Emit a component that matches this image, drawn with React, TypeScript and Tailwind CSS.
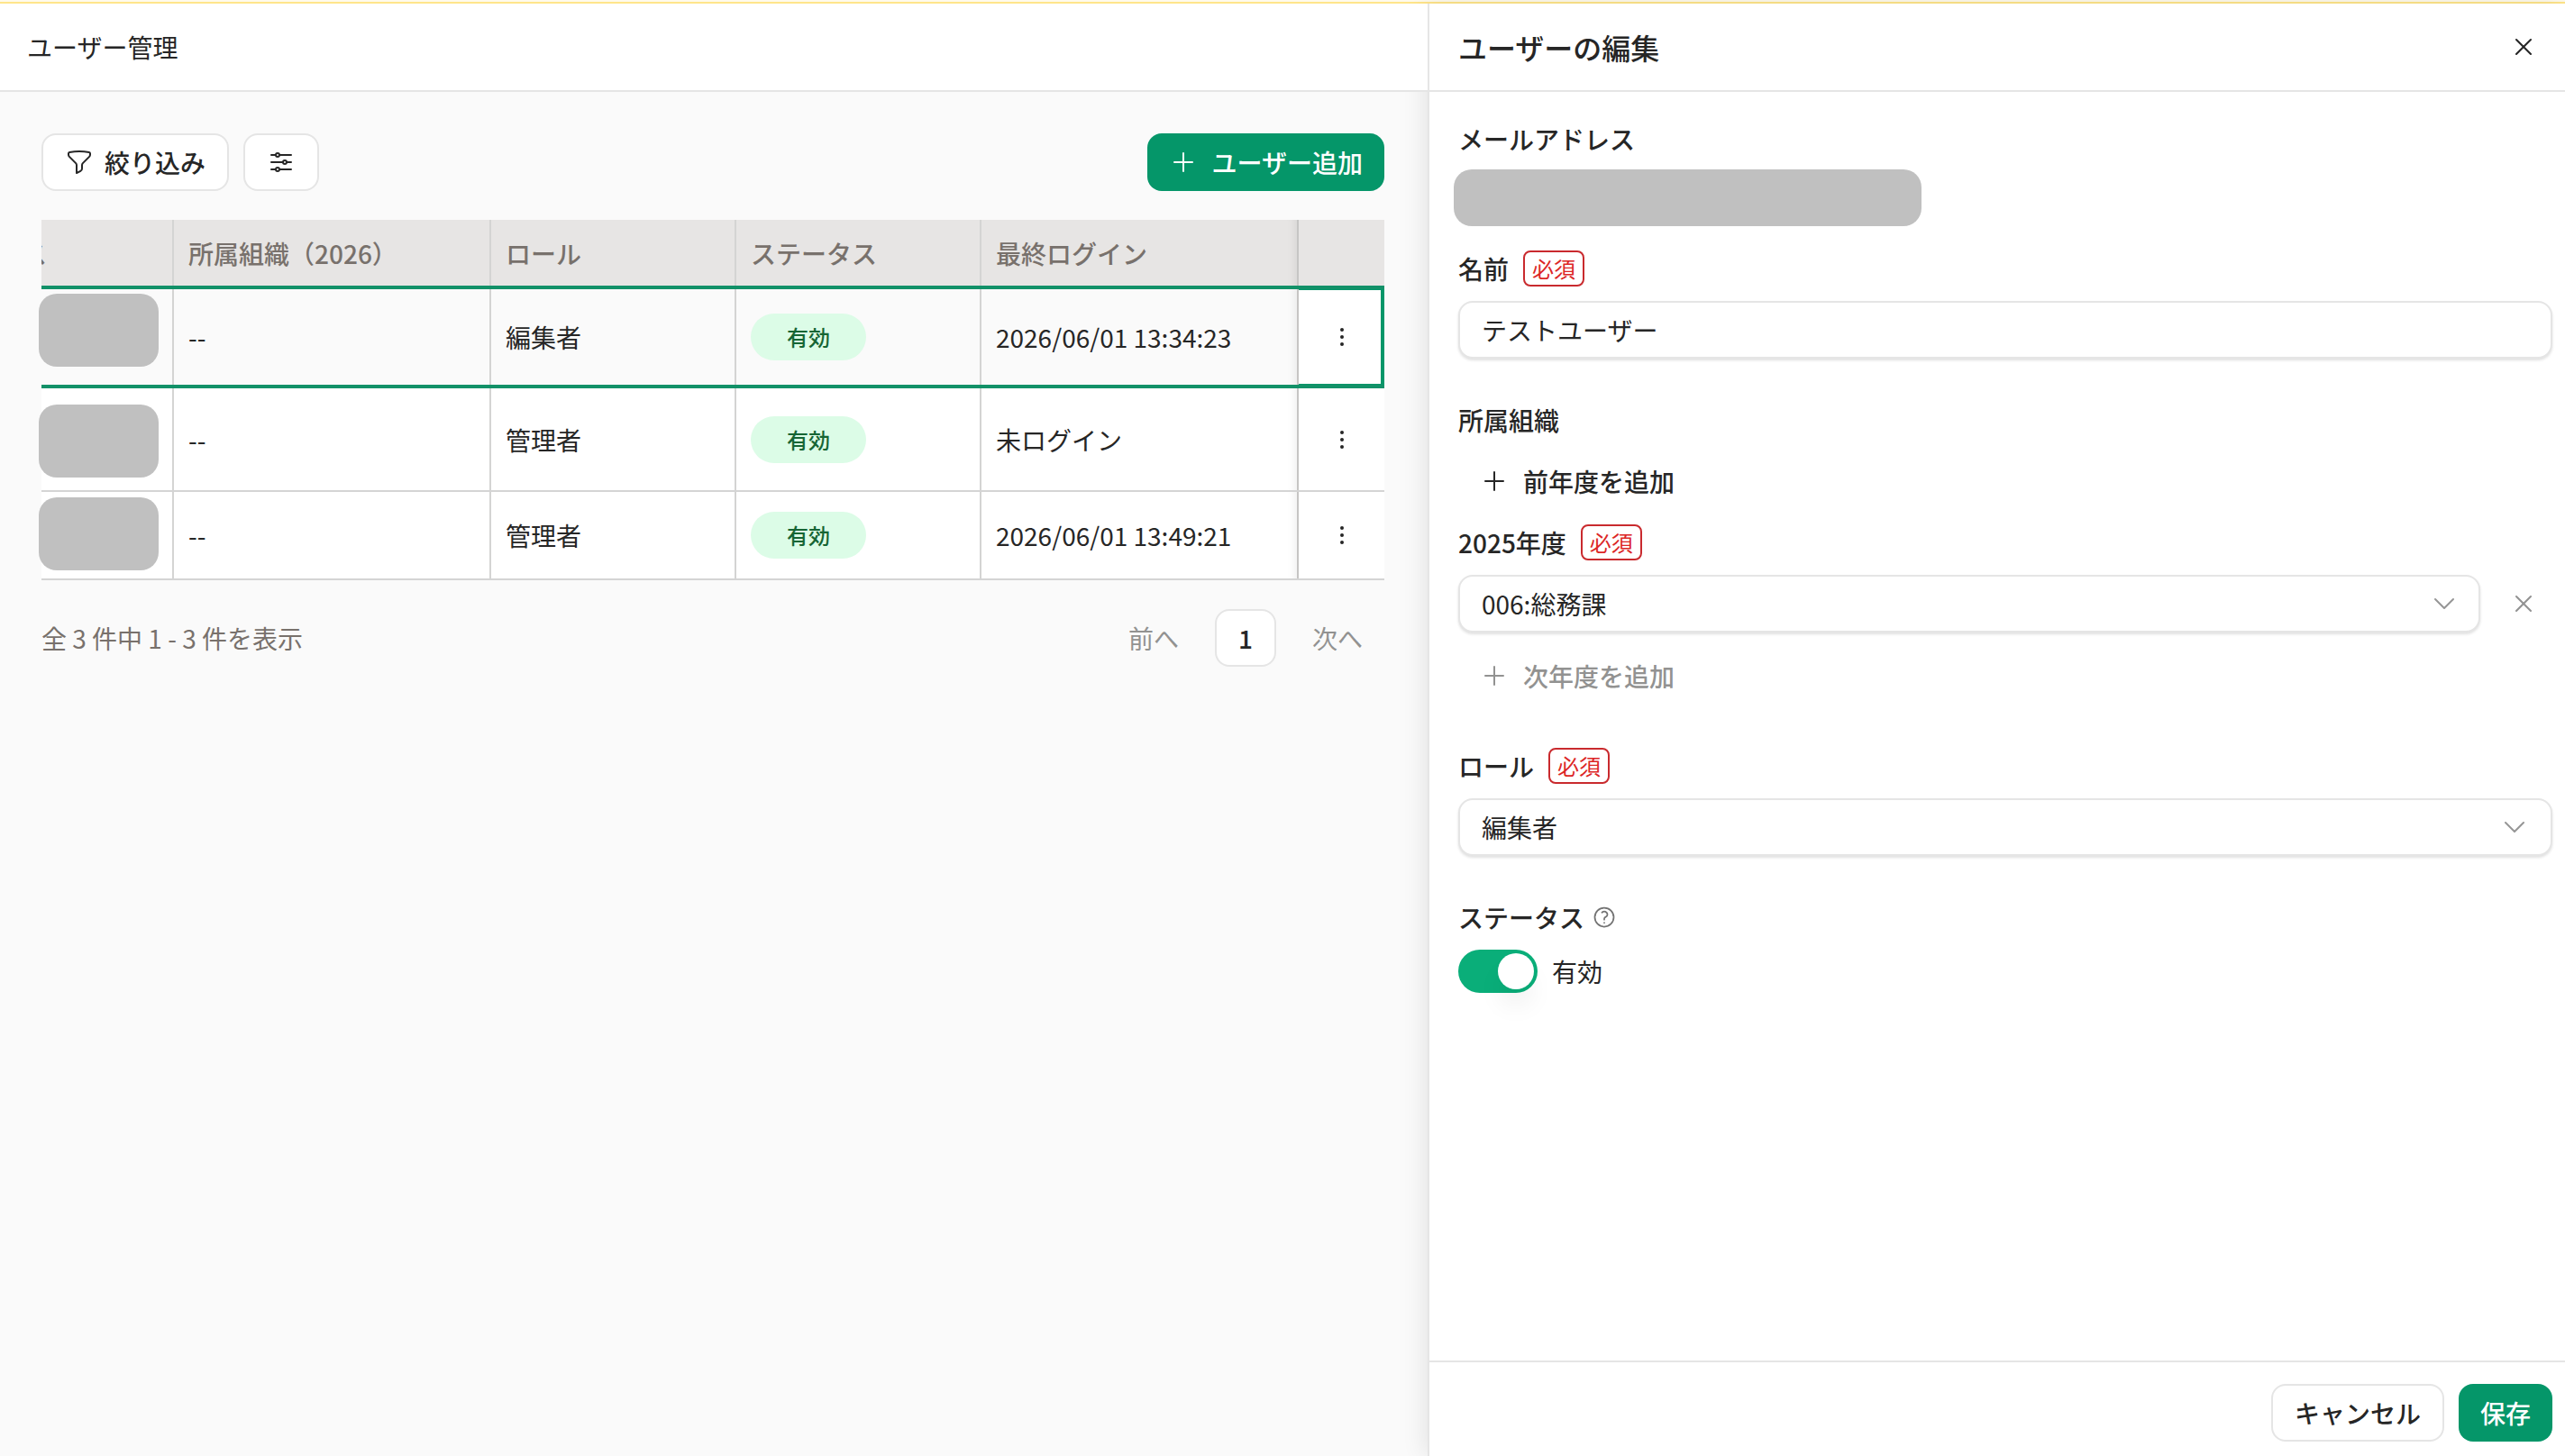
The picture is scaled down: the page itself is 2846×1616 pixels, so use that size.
import type { ReactNode } from "react";
import {
  HiOutlineAdjustmentsHorizontal,
  HiOutlineChevronDown,
  HiOutlineEllipsisVertical,
  HiOutlineFunnel,
  HiOutlinePlus,
  HiOutlineQuestionMarkCircle,
  HiOutlineXMark,
} from "react-icons/hi2";

interface UserRow {
  org: string;
  role: string;
  status: string;
  lastLogin: string;
  selected?: boolean;
  rowClass: string;
  maskClass: string;
}

const GRID = "grid grid-cols-[147px_352px_272px_272px_352px_95px]";

const users: UserRow[] = [
  {
    org: "--",
    role: "編集者",
    status: "有効",
    lastLogin: "2026/06/01 13:34:23",
    selected: true,
    rowClass: "h-[114px] border-y-4 border-[#129168] bg-neutral-50",
    maskClass: "mt-[5px]",
  },
  {
    org: "--",
    role: "管理者",
    status: "有効",
    lastLogin: "未ログイン",
    rowClass: "h-[115px] border-b-2 border-[#d4d4d4] bg-white",
    maskClass: "mt-[18px]",
  },
  {
    org: "--",
    role: "管理者",
    status: "有効",
    lastLogin: "2026/06/01 13:49:21",
    rowClass: "h-[98px] border-b-2 border-[#d4d4d4] bg-white",
    maskClass: "mt-[6px]",
  },
];

function Cell({ children, last }: { children?: ReactNode; last?: boolean }) {
  return (
    <div
      className={`flex items-center border-r-2 px-4 ${
        last
          ? "border-[#c6c5c4] shadow-[inset_-12px_0_8px_-8px_rgba(0,0,0,0.05)]"
          : "border-[#d4d4d3]"
      }`}
    >
      {children}
    </div>
  );
}

function Required() {
  return (
    <span className="flex h-10 w-[68px] items-center justify-center rounded-lg border-2 border-[#c92a2e] text-2xl leading-9 text-[#dc2626]">
      必須
    </span>
  );
}

function Label({ children, required }: { children: ReactNode; required?: boolean }) {
  return (
    <div className="flex h-10 items-center gap-4 font-medium">
      <span>{children}</span>
      {required && <div className="font-normal"><Required /></div>}
    </div>
  );
}

function Select({ value, clearable }: { value: string; clearable?: boolean }) {
  return (
    <div
      className={`flex h-16 flex-1 items-center justify-between rounded-2xl border-2 border-neutral-200 bg-white pl-6 shadow-[0_2px_3px_rgba(0,0,0,0.12)] ${
        clearable ? "pr-[22px]" : "pr-6"
      }`}
    >
      <span>{value}</span>
      <HiOutlineChevronDown className="size-8 text-[#969696]" />
    </div>
  );
}

function UserTable() {
  return (
    <div className="mt-8 w-[1490px]">
      {/* Header */}
      <div className={`${GRID} h-[73px] bg-[#e7e5e4] font-medium text-[#78716c]`}>
        <div className="flex items-center border-r-2 border-[#d4d4d3]">
          <div className="flex w-1.5 justify-end overflow-hidden">
            <span className="whitespace-nowrap">メールアドレス</span>
          </div>
        </div>
        <Cell>所属組織（2026）</Cell>
        <Cell>ロール</Cell>
        <Cell>ステータス</Cell>
        <Cell last>最終ログイン</Cell>
        <div />
      </div>

      {/* Rows */}
      {users.map((u, i) => (
        <div key={i} className={`${GRID} ${u.rowClass}`}>
          <div className="border-r-2 border-[#d4d4d3]">
            <div className={`-ml-[3px] h-[81px] w-[133px] rounded-[20px] bg-[#c0c0c0] ${u.maskClass}`} />
          </div>
          <Cell>{u.org}</Cell>
          <Cell>{u.role}</Cell>
          <Cell>
            <span className="flex h-[52px] w-32 items-center justify-center rounded-full bg-[#dcfce7] text-2xl leading-9 font-medium text-[#166534]">
              {u.status}
            </span>
          </Cell>
          <Cell last>{u.lastLogin}</Cell>
          <div
            className={`flex items-center justify-center bg-white ${
              u.selected ? "border-y border-r-4 border-[#059669]" : ""
            }`}
          >
            <HiOutlineEllipsisVertical className={u.selected ? "ml-1 size-8" : "size-8"} />
          </div>
        </div>
      ))}
    </div>
  );
}

function EditPanel() {
  return (
    <aside className="flex w-[1262px] flex-col border-l-2 border-neutral-200 bg-white shadow-[-4px_0_24px_rgba(0,0,0,0.09)]">
      <div className="flex h-[98px] items-center justify-between border-b-2 border-neutral-200 pr-[30px] pl-8">
        <h2 className="text-[32px] leading-10 font-medium">ユーザーの編集</h2>
        <HiOutlineXMark className="size-8" />
      </div>

      <div className="flex flex-1 flex-col pt-8 pr-3.5 pl-8">
        <Label>メールアドレス</Label>
        <div className="mt-3.5 -ml-[5px] h-[63px] w-[519px] rounded-[20px] bg-[#c0c0c0]" />

        <div className="mt-[27px]">
          <Label required>名前</Label>
        </div>
        <div className="mt-4 flex h-16 items-center rounded-2xl border-2 border-neutral-200 bg-white px-6 shadow-[0_2px_3px_rgba(0,0,0,0.12)]">
          テストユーザー
        </div>

        <div className="mt-12">
          <Label>所属組織</Label>
        </div>
        <button className="mt-4 flex h-16 items-center gap-4 px-6 font-medium">
          <HiOutlinePlus className="size-8" />
          前年度を追加
        </button>
        <div className="mt-4">
          <Label required>2025年度</Label>
        </div>
        <div className="mt-4 flex items-center">
          <Select value="006:総務課" clearable />
          <div className="flex w-20 justify-end pr-4">
            <HiOutlineXMark className="size-8 text-[#929292]" />
          </div>
        </div>
        <button className="mt-4 flex h-16 items-center gap-4 px-6 font-medium text-[#929291]">
          <HiOutlinePlus className="size-8" />
          次年度を追加
        </button>

        <div className="mt-12">
          <Label required>ロール</Label>
        </div>
        <div className="mt-4 flex">
          <Select value="編集者" />
        </div>

        <div className="mt-12 flex items-center gap-2">
          <Label>ステータス</Label>
          <HiOutlineQuestionMarkCircle className="size-7 text-[#737373]" />
        </div>
        <div className="mt-4 flex items-center gap-4">
          <div className="flex h-12 w-[88px] items-center justify-end rounded-full bg-[#0aae79] p-1">
            <div className="size-10 rounded-full bg-white shadow-[0_20px_30px_-6px_rgba(0,0,0,0.1)]" />
          </div>
          <span>有効</span>
        </div>
      </div>

      <div className="flex h-[106px] items-start justify-end gap-4 border-t-2 border-neutral-200 pt-6 pr-3.5 font-medium">
        <button className="h-16 rounded-2xl border-2 border-neutral-200 bg-white px-6">キャンセル</button>
        <button className="h-16 rounded-2xl bg-[#059669] px-6 text-white">保存</button>
      </div>
    </aside>
  );
}

export default function App() {
  return (
    <div className="flex h-[1616px] w-[2846px] flex-col overflow-hidden bg-neutral-50 font-['Noto_Sans_CJK_JP',sans-serif] text-[28px] leading-10 text-[#262626]">
      <div className="h-1 shrink-0 border-b-2 border-[#ffe58a] bg-[#fffbeb]" />
      <div className="flex flex-1">
        <main className="flex w-[1584px] flex-col">
          <header className="relative z-10 flex h-[98px] items-center border-b-2 border-neutral-200 bg-white px-[30px]">
            <h1>ユーザー管理</h1>
          </header>

          <div className="w-[1536px] pt-[46px] pl-[46px]">
            {/* Toolbar */}
            <div className="flex items-center gap-4">
              <button className="flex h-16 items-center gap-3 rounded-2xl border-2 border-neutral-200 bg-white px-6 font-medium">
                <HiOutlineFunnel className="size-8" />
                絞り込み
              </button>
              <button className="flex h-16 w-[84px] items-center justify-center rounded-2xl border-2 border-neutral-200 bg-white">
                <HiOutlineAdjustmentsHorizontal className="size-8" />
              </button>
              <button className="ml-auto flex h-16 items-center gap-4 rounded-2xl bg-[#059669] px-6 font-medium text-white">
                <HiOutlinePlus className="size-8" />
                ユーザー追加
              </button>
            </div>

            <UserTable />

            {/* Pagination */}
            <div className="mt-8 flex items-center justify-between text-[#78716c]">
              <p>全 3 件中 1 - 3 件を表示</p>
              <div className="flex items-center gap-4">
                <button className="px-6 text-[#929291]">前へ</button>
                <button className="h-16 w-[68px] rounded-2xl border-2 border-neutral-200 bg-white font-medium text-[#262626]">
                  1
                </button>
                <button className="px-6 text-[#929291]">次へ</button>
              </div>
            </div>
          </div>
        </main>
        <EditPanel />
      </div>
    </div>
  );
}
